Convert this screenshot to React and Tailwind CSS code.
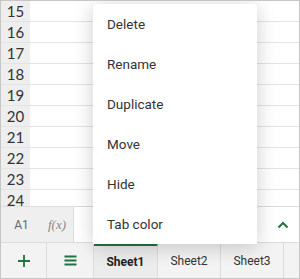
import React from "react";

const rows = [15, 16, 17, 18, 19, 20, 21, 22, 23, 24];
const items = ["Delete", "Rename", "Duplicate", "Move", "Hide", "Tab color"];

export default function App() {
  return (
    <div className="relative w-[300px] h-[279px] overflow-hidden border border-[#c6c6c6] bg-white flex flex-col" style={{ fontFamily: "Roboto, 'Liberation Sans', sans-serif" }}>
      {/* grid */}
      <div className="h-[205px] overflow-hidden flex flex-col shrink-0">
        {rows.map((r) => (
          <div key={r} className="flex h-[21px] shrink-0 border-b border-[#e4e4e4]">
            <div className="w-[29px] shrink-0 bg-[#eeeeee] flex items-center justify-center text-[15px] text-[#333]" style={{ fontFamily: "Lato, sans-serif" }}>
              {r}
            </div>
            <div className="flex-1" />
          </div>
        ))}
      </div>
      {/* formula bar */}
      <div className="h-[36px] shrink-0 flex border-t border-[#dcdcdc]">
        <div className="w-[73px] bg-[#efefef] flex items-center border-r border-[#dcdcdc]">
          <span className="w-[41px] text-center text-[12px] text-[#666]">A1</span>
          <span className="ml-[6px] text-[13px] italic text-[#888]" style={{ fontFamily: "'Liberation Serif', serif" }}>f(x)</span>
        </div>
        <div className="flex-1 flex items-center justify-end pr-[10px]">
          <svg width="12" height="8" viewBox="0 0 12 8">
            <path d="M1.5 6.5 L6 2 L10.5 6.5" fill="none" stroke="#217346" strokeWidth="2" />
          </svg>
        </div>
      </div>
      {/* tab bar */}
      <div className="flex-1 flex bg-[#f3f3f3] border-t border-[#dcdcdc]">
        <div className="w-[46px] flex items-center justify-center border-r border-[#dcdcdc]">
          <svg width="14" height="14" viewBox="0 0 14 14">
            <path d="M7 1 V13 M1 7 H13" stroke="#217346" strokeWidth="1.8" />
          </svg>
        </div>
        <div className="w-[47px] flex items-center justify-center border-r border-[#dcdcdc]">
          <svg width="13" height="11" viewBox="0 0 13 11">
            <path d="M0.5 1.5 H12.5 M0.5 5.5 H12.5 M0.5 9.5 H12.5" stroke="#217346" strokeWidth="1.8" />
          </svg>
        </div>
        <div className="w-[64px] flex items-center justify-center bg-[#ececec] border-t-[3px] border-[#217346] border-r border-r-[#dcdcdc] text-[12px] font-bold text-[#222]">
          Sheet1
        </div>
        <div className="w-[63px] flex items-center justify-center border-r border-[#dcdcdc] text-[12px] text-[#333]">
          Sheet2
        </div>
        <div className="w-[63px] flex items-center justify-center border-r border-[#dcdcdc] text-[12px] text-[#333]">
          Sheet3
        </div>
        <div className="flex-1" />
      </div>
      {/* menu */}
      <div className="absolute left-[92px] top-[3px] w-[164px] bg-white rounded-t-[4px] shadow-[0_3px_20px_rgba(0,0,0,0.2)] flex flex-col">
        {items.map((it) => (
          <div key={it} className="h-[40px] flex items-center pl-[14px] text-[13.5px] text-[#333]">
            {it}
          </div>
        ))}
      </div>
    </div>
  );
}
